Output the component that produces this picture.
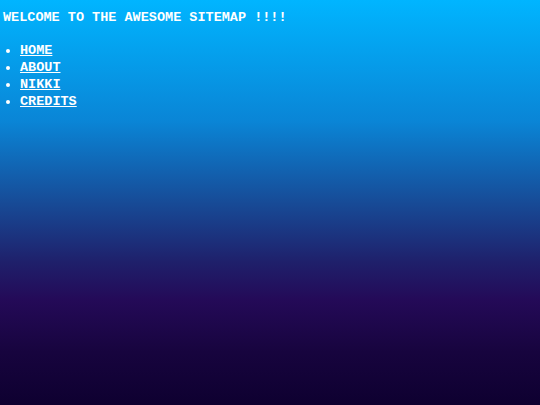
export default function App() {
    const links = ['HOME', 'ABOUT', 'NIKKI', 'CREDITS'];

    return (
        <div className="h-[405px] w-full overflow-hidden bg-[linear-gradient(to_bottom,#00b5ff_0%,#0a85d6_30%,#174b97_50%,#1f1f6a_65%,#240a58_74%,#17043e_87%,#0e0030_100%)] px-[3px] pt-[9px] font-['Liberation_Mono','Courier_New',monospace] font-bold text-white">
            <h1 className="text-[13.5px] leading-[17px]">WELCOME TO THE AWESOME SITEMAP !!!!</h1>
            <ul className="mt-[16px] list-disc pl-[17px] text-[13.5px] leading-[17px] marker:text-white">
                {links.map((l) => (
                    <li key={l}>
                        <a href="#" className="underline">
                            {l}
                        </a>
                    </li>
                ))}
            </ul>
        </div>
    );
}
